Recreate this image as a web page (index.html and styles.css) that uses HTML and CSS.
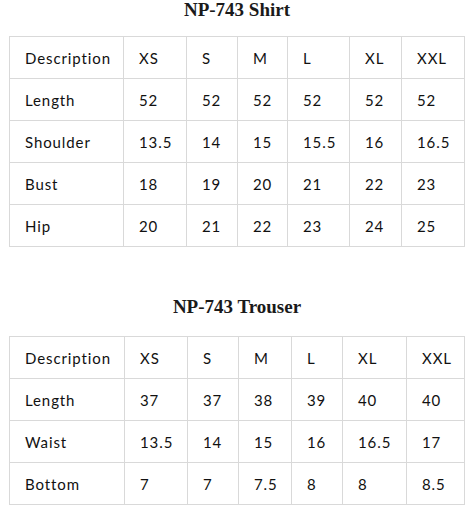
FILE: index.html
```html
<!DOCTYPE html>
<html>
<head>
<meta charset="utf-8">
<link rel="stylesheet" href="styles.css">
</head>
<body>
<section class="chart">
  <h2 class="chart-title">NP-743 Shirt</h2>
  <table class="size-table">
    <colgroup>
      <col class="c-desc"><col class="s1-xs"><col class="s1-s"><col class="s1-m"><col class="s1-l"><col class="s1-xl"><col class="s1-xxl">
    </colgroup>
    <tr><td>Description</td><td>XS</td><td>S</td><td>M</td><td>L</td><td>XL</td><td>XXL</td></tr>
    <tr><td>Length</td><td>52</td><td>52</td><td>52</td><td>52</td><td>52</td><td>52</td></tr>
    <tr><td>Shoulder</td><td>13.5</td><td>14</td><td>15</td><td>15.5</td><td>16</td><td>16.5</td></tr>
    <tr><td>Bust</td><td>18</td><td>19</td><td>20</td><td>21</td><td>22</td><td>23</td></tr>
    <tr><td>Hip</td><td>20</td><td>21</td><td>22</td><td>23</td><td>24</td><td>25</td></tr>
  </table>
</section>
<section class="chart chart-second">
  <h2 class="chart-title">NP-743 Trouser</h2>
  <table class="size-table">
    <colgroup>
      <col class="c-desc2"><col class="s2-xs"><col class="s2-s"><col class="s2-m"><col class="s2-l"><col class="s2-xl"><col class="s2-xxl">
    </colgroup>
    <tr><td>Description</td><td>XS</td><td>S</td><td>M</td><td>L</td><td>XL</td><td>XXL</td></tr>
    <tr><td>Length</td><td>37</td><td>37</td><td>38</td><td>39</td><td>40</td><td>40</td></tr>
    <tr><td>Waist</td><td>13.5</td><td>14</td><td>15</td><td>16</td><td>16.5</td><td>17</td></tr>
    <tr><td>Bottom</td><td>7</td><td>7</td><td>7.5</td><td>8</td><td>8</td><td>8.5</td></tr>
  </table>
</section>
</body>
</html>
```
FILE: styles.css
```css
html, body {
  margin: 0;
  padding: 0;
  background: #ffffff;
}
body {
  padding: 0 9px;
  color: #111111;
}
.chart-title {
  margin: 0 0 16px;
  font-family: "Liberation Serif", "Times New Roman", serif;
  font-weight: bold;
  font-size: 19px;
  line-height: 20px;
  text-align: center;
  color: #1a1a1a;
}
.chart-second {
  margin-top: 50px;
}
.chart-second .chart-title {
  margin-bottom: 19px;
}
.size-table {
  border-collapse: collapse;
  table-layout: fixed;
  width: 455px;
  font-family: Lato, "Open Sans", sans-serif;
  font-size: 15px;
  letter-spacing: 0.9px;
  color: #111111;
}
.size-table td {
  border: 1px solid #d9d9d9;
  height: 42px;
  padding: 0 0 0 15px;
  vertical-align: middle;
  white-space: nowrap;
  box-sizing: border-box;
}
.c-desc { width: 114px; }
.s1-xs { width: 63px; }
.s1-s { width: 51px; }
.s1-m { width: 50px; }
.s1-l { width: 62px; }
.s1-xl { width: 52px; }
.s1-xxl { width: 63px; }
.c-desc2 { width: 115px; }
.s2-xs { width: 63px; }
.s2-s { width: 51px; }
.s2-m { width: 53px; }
.s2-l { width: 51px; }
.s2-xl { width: 64px; }
.s2-xxl { width: 58px; }
```
